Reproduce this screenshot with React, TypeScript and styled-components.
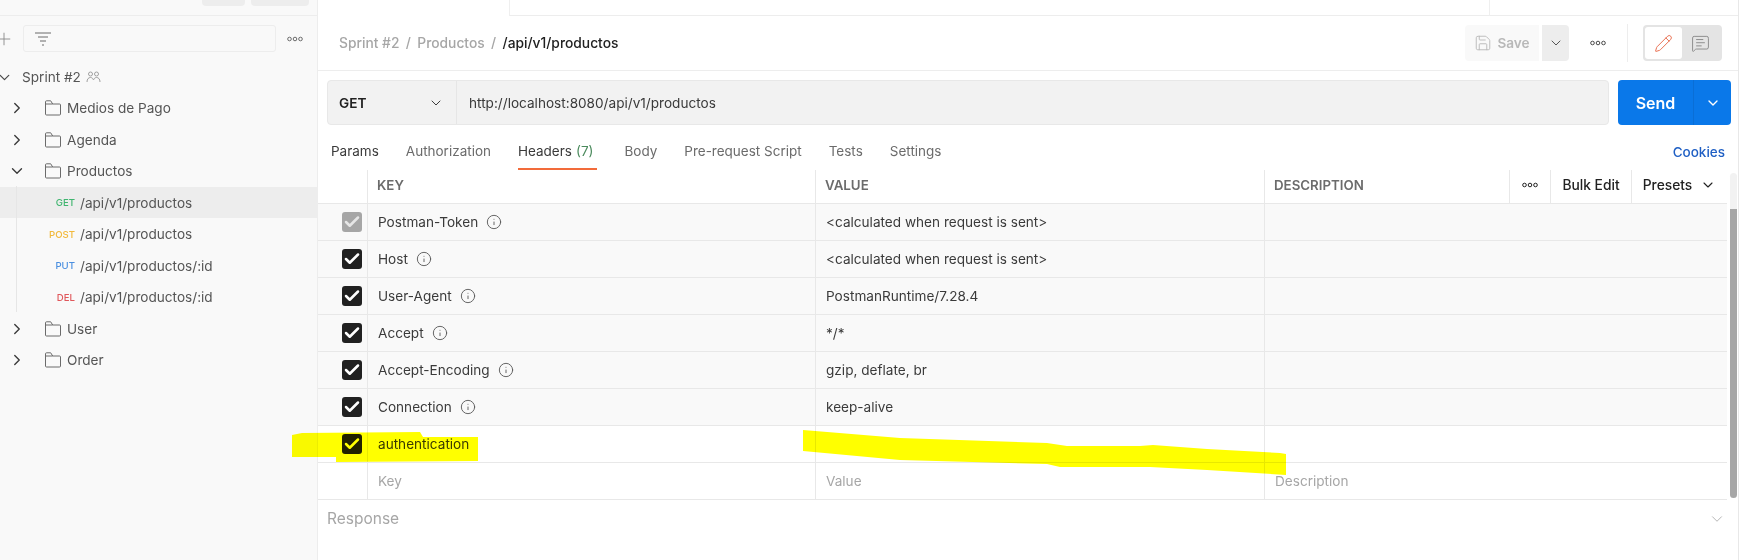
import React from "react";
import styled, { createGlobalStyle } from "styled-components";
import { Check, ChevronDown, ChevronRight, Info, MessageSquareText, Pencil, Plus, Save } from "lucide-react";

const GlobalStyle = createGlobalStyle`
  html, body { margin: 0; padding: 0; background: #fff; }
  body { font-family: "Inter", "Liberation Sans", sans-serif; font-size: 13.6px; color: #3a3a3a; }
  * { box-sizing: border-box; }
`;

const Page = styled.div`
  position: relative;
  display: flex;
  width: 1754px;
  height: 560px;
  overflow: hidden;
`;

/* ---------- sidebar ---------- */
const Sidebar = styled.aside`
  width: 318px;
  flex-shrink: 0;
  background: #f9f9f9;
  border-right: 1px solid #ededed;
`;
const SideTop = styled.div`
  height: 16px;
  border-bottom: 1px solid #ededed;
  display: flex;
  justify-content: flex-end;
  gap: 6px;
  padding-right: 8px;
`;
const SideTopBtn = styled.div<{ $w: number }>`
  width: ${(p) => p.$w}px;
  height: 6px;
  background: #ededed;
  border-radius: 0 0 4px 4px;
`;
const ToolRow = styled.div`
  height: 45.3px;
  display: flex;
  align-items: center;
  color: #6b6b6b;
`;
const PlusSlot = styled.div`
  width: 23px;
  display: flex;
  margin-left: -6px;
  margin-right: 6px;
  color: #8a8a8a;
`;
const FilterBox = styled.div`
  width: 253px;
  height: 27px;
  border: 1px solid #ededed;
  border-radius: 3px;
  display: flex;
  align-items: center;
  padding-left: 11px;
`;
const DotsSlot = styled.div`
  width: 38px;
  display: flex;
  justify-content: center;
  color: #6b6b6b;
`;
const Tree = styled.div`
  position: relative;
`;
const TreeRow = styled.div<{ $selected?: boolean }>`
  height: 31.44px;
  display: flex;
  align-items: center;
  background: ${(p) => (p.$selected ? "#ededed" : "transparent")};
  white-space: nowrap;
`;
const RootCaret = styled.span`
  width: 26.5px;
  margin-left: -4.5px;
  display: flex;
  color: #4a4a4a;
`;
const RootLabel = styled.span`
  color: #555;
  margin-right: 5px;
`;
const FolderCaret = styled.span`
  width: 45px;
  padding-left: 8px;
  display: flex;
  color: #3a3a3a;
`;
const FolderLabel = styled.span`
  margin-left: 6px;
  color: #555;
`;
const MethodTag = styled.span<{ $color: string }>`
  width: 75px;
  text-align: right;
  font-size: 9.6px;
  font-weight: 500;
  color: ${(p) => p.$color};
`;
const RequestLabel = styled.span`
  margin-left: 5px;
  color: #555;
`;
const Guide = styled.div`
  position: absolute;
  left: 16px;
  top: 125px;
  width: 1px;
  height: 126px;
  background: #e6e6e6;
`;

/* ---------- main ---------- */
const Main = styled.main`
  width: 1421px;
  flex-shrink: 0;
  display: flex;
  flex-direction: column;
  border-right: 1px solid #e8e8e8;
`;
const TabStrip = styled.div`
  height: 16px;
  flex-shrink: 0;
  display: flex;
`;
const ActiveTabSlot = styled.div`
  width: 192px;
  border-right: 1px solid #efefef;
`;
const TabSlot = styled.div`
  width: 980px;
  border-right: 1px solid #efefef;
  border-bottom: 1px solid #ededed;
`;
const TabStripRest = styled.div`
  flex: 1;
  border-bottom: 1px solid #ededed;
`;
const Head = styled.div`
  height: 55px;
  flex-shrink: 0;
  border-bottom: 1px solid #ededed;
  display: flex;
  align-items: center;
  padding-left: 21px;
`;
const Crumbs = styled.div`
  flex: 1;
  display: flex;
  align-items: center;
  font-size: 13.8px;
  font-weight: 500;
  color: #a6a6a6;
`;
const CrumbSep = styled.span`
  margin: 0 6.4px;
`;
const CrumbNow = styled.span`
  color: #212121;
`;
const SaveGroup = styled.div`
  display: flex;
  height: 36px;
`;
const SaveBtn = styled.div`
  width: 74px;
  display: flex;
  align-items: center;
  justify-content: center;
  gap: 5px;
  background: #f9f9f9;
  border-radius: 4px 0 0 4px;
  font-weight: 600;
  color: #b8b8b8;
`;
const SaveCaret = styled.div`
  width: 27px;
  margin-left: 3px;
  display: flex;
  align-items: center;
  justify-content: center;
  background: #ededed;
  border-radius: 0 4px 4px 0;
  color: #4a4a4a;
`;
const HeadDots = styled.div`
  width: 58px;
  display: flex;
  justify-content: center;
  color: #4a4a4a;
`;
const HeadDivider = styled.div`
  width: 1px;
  height: 38px;
  background: #ededed;
  margin-right: 15px;
`;
const ModeToggle = styled.div`
  width: 79px;
  height: 36px;
  padding: 2px;
  display: flex;
  background: #e4e4e4;
  border-radius: 4px;
  margin-right: 16px;
`;
const ModeBtn = styled.div<{ $active?: boolean }>`
  width: 37px;
  display: flex;
  align-items: center;
  justify-content: center;
  border-radius: 3px;
  background: ${(p) => (p.$active ? "#fff" : "transparent")};
  color: ${(p) => (p.$active ? "#e8694a" : "#8a8a8a")};
`;
const UrlRow = styled.div`
  display: flex;
  height: 45px;
  margin: 9px 7px 0 9px;
  flex-shrink: 0;
`;
const UrlBox = styled.div`
  flex: 1;
  display: flex;
  background: #f2f2f2;
  border: 1px solid #e8e8e8;
  border-radius: 4px;
  margin-right: 9px;
`;
const MethodSelect = styled.div`
  width: 129px;
  display: flex;
  align-items: center;
  justify-content: space-between;
  padding: 0 12px 0 11px;
  border-right: 1px solid #e6e6e6;
  font-weight: 600;
  color: #212121;
`;
const UrlText = styled.div`
  display: flex;
  align-items: center;
  padding-left: 12px;
  color: #3a3a3a;
`;
const SendBtn = styled.div`
  width: 113px;
  display: flex;
  background: #0a78e9;
  border-radius: 4px;
  color: #fff;
`;
const SendLabel = styled.div`
  width: 76px;
  display: flex;
  align-items: center;
  justify-content: center;
  font-size: 16px;
  font-weight: 600;
  border-right: 1px solid #0a6ed6;
`;
const SendCaret = styled.div`
  flex: 1;
  display: flex;
  align-items: center;
  justify-content: center;
`;
const TabRow = styled.div`
  height: 45px;
  flex-shrink: 0;
  display: flex;
  gap: 27px;
  padding: 0 13px;
  font-size: 13.5px;
`;
const Tab = styled.div<{ $active?: boolean; $dark?: boolean }>`
  display: flex;
  align-items: center;
  padding-top: 9px;
  padding-right: ${(p) => (p.$active ? "4px" : "0")};
  color: ${(p) => (p.$active || p.$dark ? "#3a3a3a" : "#6b6b6b")};
  border-bottom: 2px solid ${(p) => (p.$active ? "#f26b3a" : "transparent")};
`;
const TabCount = styled.span`
  margin-left: 4px;
  color: #4a8a5c;
`;
const Cookies = styled.div`
  margin-left: auto;
  display: flex;
  align-items: center;
  padding-top: 9px;
  color: #1f5fc4;
  font-weight: 500;
`;
const TableWrap = styled.div`
  display: flex;
  flex-shrink: 0;
`;
const Table = styled.div`
  width: 1409px;
`;
const Row = styled.div<{ $header?: boolean; $shaded?: boolean }>`
  height: ${(p) => (p.$header ? "34px" : "37px")};
  display: grid;
  grid-template-columns: 50px 448px 449px 245px 41px 81px 95px;
  background: ${(p) => (p.$shaded ? "#f9f9f9" : "#fff")};
  border-bottom: 1px solid #e8e8e8;
`;
const Cell = styled.div<{ $line?: boolean; $center?: boolean }>`
  display: flex;
  align-items: center;
  justify-content: ${(p) => (p.$center ? "center" : "flex-start")};
  padding: ${(p) => (p.$center ? "0" : "0 10px")};
  border-right: ${(p) => (p.$line ? "1px solid #e8e8e8" : "none")};
  min-width: 0;
  white-space: nowrap;
`;
const CheckCell = styled.div`
  display: flex;
  align-items: center;
  justify-content: flex-end;
  padding-right: 5px;
  border-right: 1px solid #e8e8e8;
`;
const HeadCell = styled(Cell)`
  padding: 0 9px 4px;
  font-size: 13.3px;
  font-weight: 600;
  color: #6b6b6b;
`;
const ActionCell = styled(Cell)`
  padding-bottom: 4px;
  color: #212121;
  font-size: 13.8px;
  font-weight: 500;
  gap: 8px;
`;
const CheckBox = styled.div<{ $muted?: boolean }>`
  width: 20px;
  height: 20px;
  border-radius: 3px;
  display: flex;
  align-items: center;
  justify-content: center;
  background: ${(p) => (p.$muted ? "#a6a6a6" : "#212121")};
  color: ${(p) => (p.$muted ? "#e6e6e6" : "#fff")};
`;
const KeyName = styled.span`
  color: #3a3a3a;
`;
const HintIcon = styled(Info)`
  margin-left: 8px;
  color: #5a5a5a;
`;
const Placeholder = styled.span`
  color: #a6a6a6;
`;
const Track = styled.div`
  width: 7px;
  height: 325px;
  margin: 3px 0 0 3px;
  background: #f2f2f2;
  border-radius: 4px;
  padding-top: 36px;
`;
const Thumb = styled.div`
  height: 289px;
  background: #a6a6a6;
  border-radius: 0 0 4px 4px;
`;
const ResponseBar = styled.div`
  display: flex;
  align-items: center;
  justify-content: space-between;
  height: 37px;
  padding: 0 12px 0 9px;
  font-size: 15.5px;
  color: #a6a6a6;
`;
const Marker = styled.svg`
  position: absolute;
  left: 0;
  top: 0;
  pointer-events: none;
  mix-blend-mode: multiply;
`;

const FolderIcon = () => (
  <svg width="16" height="16" viewBox="0 0 16 16" fill="none" stroke="#6b6b6b" strokeWidth="1">
    <path d="M.5 14V1.800a1 1 0 0 1 1-1h4.200l2 3.200h6.800a1 1 0 0 1 1 1V14a1 1 0 0 1-1 1h-13a1 1 0 0 1-1-1z" />
    <path d="M.5 4h7.200" />
  </svg>
);
const Dots = () => (
  <svg width="16" height="6" viewBox="0 0 16 6" fill="none" stroke="currentColor" strokeWidth="1">
    <circle cx="2.500" cy="3" r="1.800" />
    <circle cx="8" cy="3" r="1.800" />
    <circle cx="13.500" cy="3" r="1.800" />
  </svg>
);
const FilterIcon = () => (
  <svg width="16" height="14" viewBox="0 0 16 14" stroke="#6b6b6b" strokeWidth="1">
    <path d="M0 1h16M3 5h10M5 9h6M7 13h2" />
  </svg>
);
const TeamIcon = () => (
  <svg width="15" height="12" viewBox="0 0 15 12" fill="none" stroke="#a0a0a0" strokeWidth="1">
    <circle cx="4.500" cy="3" r="2" />
    <circle cx="10.500" cy="3" r="2" />
    <path d="M1 11c0-3 1.500-4.500 3.500-4.500S7 8 7.500 9M14 11c0-3-1.500-4.500-3.500-4.500S8 8 7.500 9" />
  </svg>
);

const folder = (name: string, open = false) => (
  <TreeRow key={name}>
    <FolderCaret>
      {open ? <ChevronDown size={18} strokeWidth={1.8} /> : <ChevronRight size={18} strokeWidth={1.8} />}
    </FolderCaret>
    <FolderIcon />
    <FolderLabel>{name}</FolderLabel>
  </TreeRow>
);

const requests = [
  { method: "GET", color: "#3fb56f", path: "/api/v1/productos", selected: true },
  { method: "POST", color: "#f2b93b", path: "/api/v1/productos" },
  { method: "PUT", color: "#4a8fe0", path: "/api/v1/productos/:id" },
  { method: "DEL", color: "#e0575b", path: "/api/v1/productos/:id" },
];

const headers = [
  { key: "Postman-Token", value: "<calculated when request is sent>", muted: true },
  { key: "Host", value: "<calculated when request is sent>" },
  { key: "User-Agent", value: "PostmanRuntime/7.28.4" },
  { key: "Accept", value: "*/*" },
  { key: "Accept-Encoding", value: "gzip, deflate, br" },
  { key: "Connection", value: "keep-alive" },
];

// description, dots, bulk edit and presets have no dividers below the header
const emptyCells = (
  <>
    <Cell />
    <Cell />
    <Cell />
    <Cell />
  </>
);

export default function App() {
  return (
    <Page>
      <GlobalStyle />
      <Sidebar>
        <SideTop>
          <SideTopBtn $w={43} />
          <SideTopBtn $w={58} />
        </SideTop>
        <ToolRow>
          <PlusSlot>
            <Plus size={20} strokeWidth={1.1} />
          </PlusSlot>
          <FilterBox>
            <FilterIcon />
          </FilterBox>
          <DotsSlot>
            <Dots />
          </DotsSlot>
        </ToolRow>
        <Tree>
          <TreeRow>
            <RootCaret>
              <ChevronDown size={17} strokeWidth={1.7} />
            </RootCaret>
            <RootLabel>Sprint #2</RootLabel>
            <TeamIcon />
          </TreeRow>
          {folder("Medios de Pago")}
          {folder("Agenda")}
          {folder("Productos", true)}
          {requests.map((r) => (
            <TreeRow key={r.method} $selected={r.selected}>
              <MethodTag $color={r.color}>{r.method}</MethodTag>
              <RequestLabel>{r.path}</RequestLabel>
            </TreeRow>
          ))}
          {folder("User")}
          {folder("Order")}
          <Guide />
        </Tree>
      </Sidebar>

      <Main>
        <TabStrip>
          <ActiveTabSlot />
          <TabSlot />
          <TabStripRest />
        </TabStrip>
        <Head>
          <Crumbs>
            <span>Sprint #2</span>
            <CrumbSep>/</CrumbSep>
            <span>Productos</span>
            <CrumbSep>/</CrumbSep>
            <CrumbNow>/api/v1/productos</CrumbNow>
          </Crumbs>
          <SaveGroup>
            <SaveBtn>
              <Save size={18} strokeWidth={1.2} />
              Save
            </SaveBtn>
            <SaveCaret>
              <ChevronDown size={16} strokeWidth={1.4} />
            </SaveCaret>
          </SaveGroup>
          <HeadDots>
            <Dots />
          </HeadDots>
          <HeadDivider />
          <ModeToggle>
            <ModeBtn $active>
              <Pencil size={19} strokeWidth={1.2} />
            </ModeBtn>
            <ModeBtn>
              <MessageSquareText size={19} strokeWidth={1.2} />
            </ModeBtn>
          </ModeToggle>
        </Head>
        <UrlRow>
          <UrlBox>
            <MethodSelect>
              GET
              <ChevronDown size={16} strokeWidth={1.3} />
            </MethodSelect>
            <UrlText>http://localhost:8080/api/v1/productos</UrlText>
          </UrlBox>
          <SendBtn>
            <SendLabel>Send</SendLabel>
            <SendCaret>
              <ChevronDown size={16} strokeWidth={2} />
            </SendCaret>
          </SendBtn>
        </UrlRow>
        <TabRow>
          <Tab $dark>Params</Tab>
          <Tab>Authorization</Tab>
          <Tab $active>
            Headers<TabCount>(7)</TabCount>
          </Tab>
          <Tab>Body</Tab>
          <Tab>Pre-request Script</Tab>
          <Tab>Tests</Tab>
          <Tab>Settings</Tab>
          <Cookies>Cookies</Cookies>
        </TabRow>
        <TableWrap>
          <Table>
            <Row $header>
              <Cell $line />
              <HeadCell $line>KEY</HeadCell>
              <HeadCell $line>VALUE</HeadCell>
              <HeadCell $line>DESCRIPTION</HeadCell>
              <ActionCell $line $center>
                <Dots />
              </ActionCell>
              <ActionCell $line $center>
                Bulk Edit
              </ActionCell>
              <ActionCell $center>
                Presets
                <ChevronDown size={16} strokeWidth={1.6} />
              </ActionCell>
            </Row>
            {headers.map((h) => (
              <Row key={h.key} $shaded>
                <CheckCell>
                  <CheckBox $muted={h.muted}>
                    <Check size={18} strokeWidth={3.4} />
                  </CheckBox>
                </CheckCell>
                <Cell $line>
                  <KeyName>{h.key}</KeyName>
                  <HintIcon size={16} strokeWidth={1.4} />
                </Cell>
                <Cell $line>{h.value}</Cell>
                {emptyCells}
              </Row>
            ))}
            <Row>
              <CheckCell>
                <CheckBox>
                  <Check size={18} strokeWidth={3.4} />
                </CheckBox>
              </CheckCell>
              <Cell $line>
                <KeyName>authentication</KeyName>
              </Cell>
              <Cell $line />
              {emptyCells}
            </Row>
            <Row>
              <Cell $line />
              <Cell $line>
                <Placeholder>Key</Placeholder>
              </Cell>
              <Cell $line>
                <Placeholder>Value</Placeholder>
              </Cell>
              <Cell>
                <Placeholder>Description</Placeholder>
              </Cell>
              <Cell />
              <Cell />
              <Cell />
            </Row>
          </Table>
          <Track>
            <Thumb />
          </Track>
        </TableWrap>
        <ResponseBar>
          Response
          <ChevronDown size={18} strokeWidth={1.1} />
        </ResponseBar>
      </Main>

      <Marker width="1754" height="560" viewBox="0 0 1754 560">
        <path
          fill="#ffff00"
          d="M292 435 L302 433 L420 432 L423 437 L478 437 L478 461 L336 462 L336 457 L292 457 Z"
        />
        <path
          fill="#ffff00"
          d="M803 430 L900 438 L1047 443 L1067 446 L1140 446 L1153 445 L1207 449 L1280 453 L1286 454 L1286 475 L1207 470 L1150 467 L1060 467 L1047 464 L900 460 L803 451 Z"
        />
      </Marker>
    </Page>
  );
}
